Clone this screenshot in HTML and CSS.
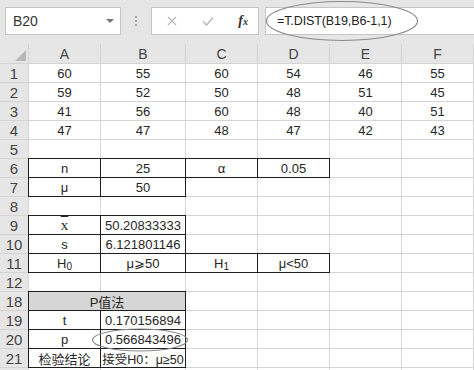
FILE: index.html
```html
<!DOCTYPE html>
<html lang="zh-CN">
<head>
  <meta charset="UTF-8" />
  <title>P值法</title>
  <link rel="stylesheet" href="styles.css">
</head>
<body>

  <!-- Name box + formula bar -->
  <div class="toolbar">
    <div class="name-box">B20 <span class="arrow"></span></div>
    <div class="sep"><i></i><i></i><i></i></div>
    <div class="buttons">
      <svg width="10" height="10" viewBox="0 0 10 10"><path d="M1 1L9 9M9 1L1 9" stroke="#b8b8b8" stroke-width="1.3" fill="none"/></svg>
      <svg width="12" height="10" viewBox="0 0 12 10"><path d="M1 5.5L4.5 9L11 1.5" stroke="#b8b8b8" stroke-width="1.5" fill="none"/></svg>
      <span class="fx">f<span>x</span></span>
    </div>
    <div class="formula">=T.DIST(B19,B6-1,1)</div>
  </div>

  <div class="sheet">
    <div class="hd corner"><span></span></div>
    <div class="hd">A</div><div class="hd">B</div><div class="hd">C</div>
    <div class="hd">D</div><div class="hd">E</div><div class="hd">F</div>

    <div class="hd rh">1</div><div>60</div><div>55</div><div>60</div><div>54</div><div>46</div><div>55</div>
    <div class="hd rh">2</div><div>59</div><div>52</div><div>50</div><div>48</div><div>51</div><div>45</div>
    <div class="hd rh">3</div><div>41</div><div>56</div><div>60</div><div>48</div><div>40</div><div>51</div>
    <div class="hd rh">4</div><div>47</div><div>47</div><div>48</div><div>47</div><div>42</div><div>43</div>
    <div class="hd rh">5</div><div></div><div></div><div></div><div></div><div></div><div></div>

    <div class="hd rh">6</div><div class="bx">n</div><div class="bx">25</div><div class="bx">α</div><div class="bx">0.05</div><div></div><div></div>
    <div class="hd rh">7</div><div class="bx">μ</div><div class="bx">50</div><div></div><div></div><div></div><div></div>
    <div class="hd rh">8</div><div></div><div></div><div></div><div></div><div></div><div></div>

    <div class="hd rh">9</div><div class="bx"><span class="xbar">x</span></div><div class="bx">50.20833333</div><div></div><div></div><div></div><div></div>
    <div class="hd rh">10</div><div class="bx">s</div><div class="bx">6.121801146</div><div></div><div></div><div></div><div></div>
    <div class="hd rh">11</div><div class="bx"><span>H<sub>0</sub></span></div><div class="bx">μ⩾50</div><div class="bx"><span>H<sub>1</sub></span></div><div class="bx">μ&lt;50</div><div></div><div></div>
    <div class="hd rh">12</div><div></div><div></div><div></div><div></div><div></div><div></div>

    <div class="hd rh">18</div><div class="bx title">P值法</div><div></div><div></div><div></div><div></div>
    <div class="hd rh">19</div><div class="bx">t</div><div class="bx">0.170156894</div><div></div><div></div><div></div><div></div>
    <div class="hd rh">20</div><div class="bx">p</div><div class="bx">0.566843496</div><div></div><div></div><div></div><div></div>
    <div class="hd rh">21</div><div class="bx">检验结论</div><div class="bx small">接受H0：μ≥50</div><div></div><div></div><div></div><div></div>
    <div class="hd rh"></div><div></div><div></div><div></div><div></div><div></div><div></div>
  </div>

  <!-- hand-drawn circles over the formula and the p value -->
  <svg class="mark mark-formula" width="154" height="42" viewBox="0 0 154 42"><ellipse cx="77" cy="21" rx="75.5" ry="19.5" fill="none" stroke="#8a8a8a" stroke-width="1.2"/></svg>
  <svg class="mark mark-p" width="100" height="26" viewBox="0 0 100 26"><ellipse cx="49" cy="13" rx="47.5" ry="11" fill="none" stroke="#8a8a8a" stroke-width="1.2"/></svg>

</body>
</html>
```

FILE: styles.css
```css
/* Base Reset */
* {
  margin: 0;
  padding: 0;
  box-sizing: border-box;
}

body {
  position: relative;
  width: 474px;
  height: 370px;
  overflow: hidden;
  background: #e6e6e6;
  color: #262626;
  font-family: "Liberation Sans", "Noto Sans CJK SC", sans-serif;
}

/* Toolbar */
.toolbar {
  display: flex;
  height: 44px;
  padding: 7px 0 9px 5px;
}

.name-box {
  width: 116px;
  background: #fff;
  border: 1px solid #c6c6c6;
  display: flex;
  align-items: center;
  justify-content: space-between;
  padding: 0 6px 0 7px;
  font-size: 14px;
  color: #333;
}

.arrow {
  border-left: 4px solid transparent;
  border-right: 4px solid transparent;
  border-top: 4px solid #777;
}

.sep {
  width: 30px;
  display: flex;
  flex-direction: column;
  align-items: center;
  justify-content: center;
  gap: 2px;
}

.sep i {
  width: 2px;
  height: 2px;
  background: #a8a8a8;
}

.buttons {
  width: 108px;
  background: #fff;
  border: 1px solid #c6c6c6;
  display: flex;
  align-items: center;
  justify-content: space-between;
  padding: 0 10px 0 15px;
}

.fx {
  font-family: "Liberation Serif", serif;
  font-style: italic;
  font-weight: bold;
  font-size: 14px;
  color: #333;
}

.fx span {
  font-size: 10px;
}

.formula {
  flex: 1;
  margin-left: 6px;
  margin-right: -1px;
  background: #fff;
  border: 1px solid #c6c6c6;
  display: flex;
  align-items: center;
  padding-left: 11px;
  font-size: 12.5px;
  letter-spacing: -0.1px;
  color: #222;
}

/* Sheet grid */
.sheet {
  display: grid;
  grid-template-columns: 28px 71px 84px repeat(4, 71px);
  grid-template-rows: 19px;
  grid-auto-rows: 18px;
  gap: 1px;
  padding-right: 1px;
  background: #d4d4d4;
}

.sheet > div {
  background: #fff;
  display: flex;
  align-items: center;
  justify-content: center;
  white-space: nowrap;
  font-size: 13px;
}

.sheet > .hd {
  background: #e6e6e6;
  color: #444;
  font-size: 14px;
}

.sheet > .rh {
  font-size: 15px;
}

.sheet > .small {
  font-size: 12.5px;
}

.corner {
  justify-content: flex-end !important;
  align-items: flex-end !important;
  padding: 0 2px 2px 0;
}

.corner span {
  border-left: 11px solid transparent;
  border-bottom: 11px solid #b8b8b8;
}

.bx {
  outline: 1px solid #1e1e1e;
}

.sheet > .title {
  grid-column: span 2;
  background: #d6d6d6;
}

.xbar {
  font-family: "Liberation Serif", serif;
  font-size: 15px;
  text-decoration: overline;
}

sub {
  font-size: 10px;
  vertical-align: -2px;
  line-height: 0;
}

/* Circles */
.mark {
  position: absolute;
}

.mark-formula {
  left: 265px;
  top: 0;
}

.mark-p {
  left: 91px;
  top: 327px;
}
```
